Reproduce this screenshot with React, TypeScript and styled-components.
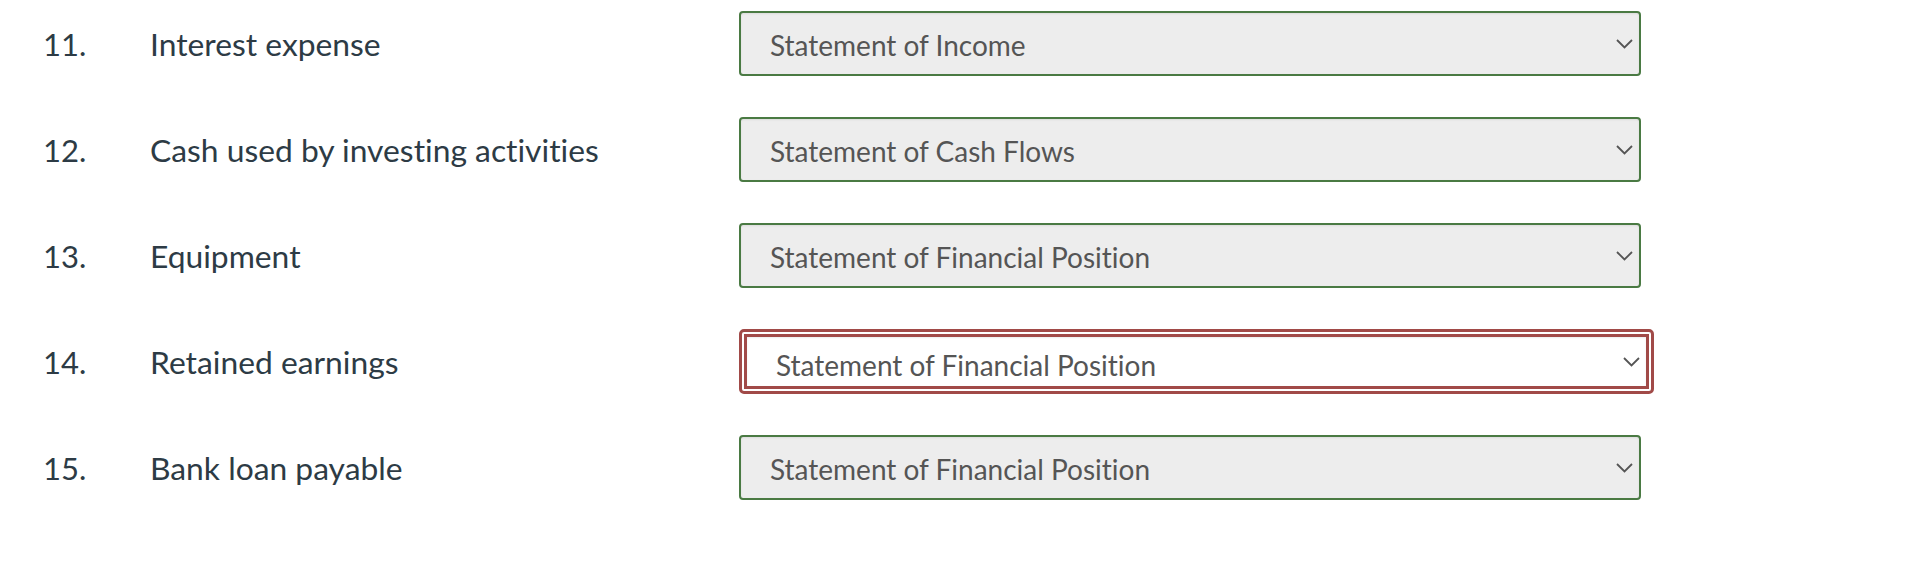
import { createGlobalStyle, styled } from 'styled-components';

const GlobalStyle = createGlobalStyle`
  html, body {
    margin: 0;
    padding: 0;
    background: #ffffff;
  }
  body {
    font-family: Lato, 'Noto Sans', sans-serif;
    font-variant-ligatures: none;
  }
`;

const Page = styled.div`
  display: flex;
  flex-direction: column;
  gap: 41px;
  padding: 11px 0 0 43px;
`;

const Row = styled.div`
  display: flex;
  flex-direction: row;
  align-items: center;
  height: 65px;
`;

const Num = styled.div`
  width: 107px;
  font-size: 31px;
  color: #2d3b45;
`;

const Label = styled.div`
  width: 589px;
  font-size: 31.8px;
  color: #2d3b45;
`;

const SelectWrap = styled.div<{ $invalid?: boolean }>`
  position: relative;
  display: flex;
  ${(p) =>
    p.$invalid
      ? `
    border: 3px solid #a14a48;
    border-radius: 5px;
    padding: 2px;
  `
      : ''}
`;

const Select = styled.select<{ $invalid?: boolean }>`
  appearance: none;
  -webkit-appearance: none;
  box-sizing: border-box;
  width: ${(p) => (p.$invalid ? 905 : 902)}px;
  height: ${(p) => (p.$invalid ? 55 : 65)}px;
  margin: 0;
  padding: ${(p) => (p.$invalid ? '7px 40px 0 29px' : '2px 40px 0 29px')};
  font-family: Lato, 'Noto Sans', sans-serif;
  font-variant-ligatures: none;
  font-size: 28px;
  color: #555555;
  background: ${(p) => (p.$invalid ? '#ffffff' : '#ededed')};
  border: ${(p) => (p.$invalid ? '3px solid #a14a48' : '2px solid #4a7a43')};
  border-radius: ${(p) => (p.$invalid ? 0 : 4)}px;
  box-shadow: inset 0 1px 2px rgba(0, 0, 0, 0.08);
  outline: none;
`;

const Chevron = styled.svg<{ $invalid?: boolean }>`
  position: absolute;
  right: ${(p) => (p.$invalid ? 11 : 8)}px;
  top: 50%;
  transform: translateY(-50%);
  pointer-events: none;
`;

const items = [
  { n: '11.', label: 'Interest expense', value: 'Statement of Income' },
  { n: '12.', label: 'Cash used by investing activities', value: 'Statement of Cash Flows' },
  { n: '13.', label: 'Equipment', value: 'Statement of Financial Position' },
  { n: '14.', label: 'Retained earnings', value: 'Statement of Financial Position', invalid: true },
  { n: '15.', label: 'Bank loan payable', value: 'Statement of Financial Position' },
];

const options = [
  'Statement of Income',
  'Statement of Changes in Equity',
  'Statement of Financial Position',
  'Statement of Cash Flows',
];

export default function App() {
  return (
    <>
      <GlobalStyle />
      <Page>
        {items.map((item) => (
          <Row key={item.n}>
            <Num>{item.n}</Num>
            <Label>{item.label}</Label>
            <SelectWrap $invalid={item.invalid}>
              <Select $invalid={item.invalid} defaultValue={item.value}>
                {options.map((o) => (
                  <option key={o} value={o}>
                    {o}
                  </option>
                ))}
              </Select>
              <Chevron $invalid={item.invalid} width="17" height="10" viewBox="0 0 17 10">
                <path d="M1 1 L8.5 8.5 L16 1" fill="none" stroke="#555555" strokeWidth="1.8" />
              </Chevron>
            </SelectWrap>
          </Row>
        ))}
      </Page>
    </>
  );
}
